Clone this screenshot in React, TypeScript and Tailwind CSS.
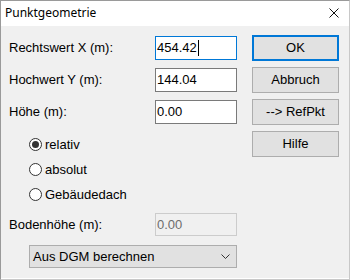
import React from "react";

const font = { fontFamily: '"Liberation Sans", Arial, sans-serif' };

function Radio({ checked, label }: { checked?: boolean; label: string }) {
  return (
    <div className="flex items-center h-[25px] pl-[20px]">
      <span className="w-[13px] h-[13px] rounded-full border border-[#333] bg-white flex items-center justify-center">
        {checked && <span className="w-[7px] h-[7px] rounded-full bg-[#333]" />}
      </span>
      <span className="ml-[3px] text-[13px] text-black">{label}</span>
    </div>
  );
}

function Btn({ label, primary }: { label: string; primary?: boolean }) {
  return (
    <div
      className={
        "w-[87px] h-[26px] flex items-center justify-center bg-[#e1e1e1] text-[13px] text-black " +
        (primary ? "border-2 border-[#0078d7]" : "border border-[#adadad]")
      }
    >
      {label}
    </div>
  );
}

export default function App() {
  return (
    <div
      className="w-[350px] h-[280px] bg-white relative overflow-hidden"
      style={font}
    >
      <div className="absolute inset-0 border border-[#9a9a9a] border-b-[#c8c8c8] border-r-[#c8c8c8] pointer-events-none" />
      <div className="h-[26px] flex items-center justify-between pl-[5px] pr-[11px] bg-white">
        <span
          className="text-[12px] text-black"
          style={{ fontFamily: '"Noto Sans", "Open Sans", sans-serif' }}
        >
          Punktgeometrie
        </span>
        <svg width="10" height="10" viewBox="0 0 10 10">
          <path d="M0.5 0.5 L9.5 9.5 M9.5 0.5 L0.5 9.5" stroke="#111" strokeWidth="1" />
        </svg>
      </div>
      <div className="mx-[1px] h-[252px] bg-[#f0f0f0] flex pl-[8px] pt-[9px]">
        <div className="flex flex-col w-[229px]">
          <div className="flex items-center h-[24px] mt-[1px]">
            <span className="w-[146px] text-[13px]">Rechtswert X (m):</span>
            <div className="w-[82px] h-[24px] bg-white border border-[#0078d7] flex items-center pl-[1px] text-[13px] relative">
              454.42
              <span className="w-[1px] h-[16px] bg-black ml-[1px]" />
            </div>
          </div>
          <div className="flex items-center h-[24px] mt-[8px]">
            <span className="w-[146px] text-[13px]">Hochwert Y (m):</span>
            <div className="w-[82px] h-[24px] bg-white border border-[#7a7a7a] flex items-center pl-[1px] text-[13px]">
              144.04
            </div>
          </div>
          <div className="flex items-center h-[24px] mt-[8px]">
            <span className="w-[146px] text-[13px]">Höhe (m):</span>
            <div className="w-[82px] h-[24px] bg-white border border-[#7a7a7a] flex items-center pl-[1px] text-[13px]">
              0.00
            </div>
          </div>
          <div className="flex flex-col mt-[8px]">
            <Radio checked label="relativ" />
            <Radio label="absolut" />
            <Radio label="Gebäudedach" />
          </div>
          <div className="flex items-center h-[23px] mt-[6px]">
            <span className="w-[146px] text-[13px]">Bodenhöhe (m):</span>
            <div className="w-[82px] h-[23px] bg-[#f0f0f0] border border-[#cccccc] flex items-center pl-[1px] text-[13px] text-[#6d6d6d]">
              0.00
            </div>
          </div>
          <div className="ml-[20px] mt-[9px] w-[208px] h-[23px] bg-[#e1e1e1] border border-[#adadad] flex items-center justify-between pl-[3px] pr-[6px] text-[13px]">
            <span>Aus DGM berechnen</span>
            <svg width="9" height="5" viewBox="0 0 9 5">
              <path d="M0.5 0.5 L4.5 4.5 L8.5 0.5" stroke="#333" strokeWidth="1" fill="none" />
            </svg>
          </div>
        </div>
        <div className="flex flex-col ml-[14px] gap-[6px]">
          <Btn label="OK" primary />
          <Btn label="Abbruch" />
          <Btn label="--> RefPkt" />
          <Btn label="Hilfe" />
        </div>
      </div>
    </div>
  );
}
